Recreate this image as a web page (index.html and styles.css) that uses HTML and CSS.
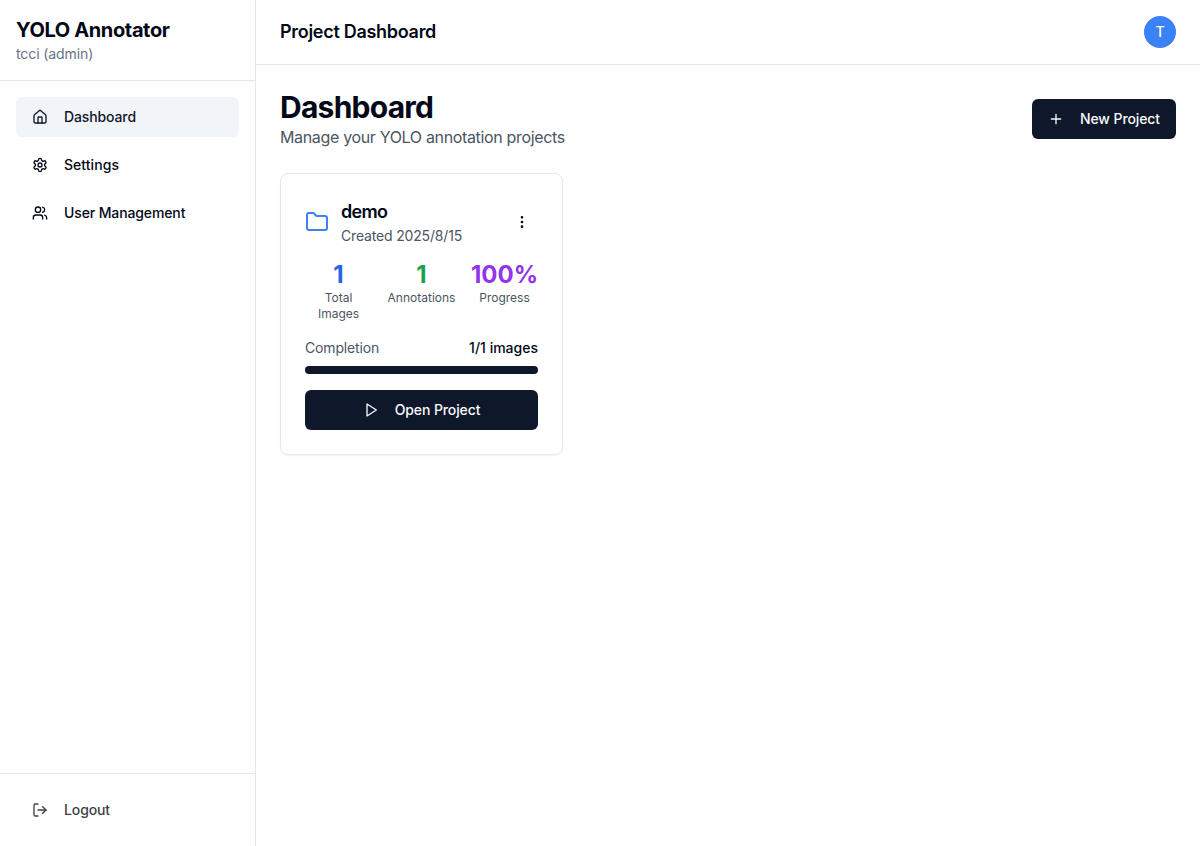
FILE: index.html
```html
<!DOCTYPE html>
<html lang="en">
<head>
<meta charset="utf-8">
<title>YOLO Annotator</title>
<link rel="stylesheet" href="styles.css">
</head>
<body>
<div class="app">
  <aside class="sidebar">
    <div class="brand">
      <h1 class="brand-name">YOLO Annotator</h1>
      <p class="brand-user">tcci (admin)</p>
    </div>
    <nav class="nav">
      <a class="nav-item active"><svg class="icon" viewBox="0 0 24 24"><path d="M15 21v-8a1 1 0 0 0-1-1h-4a1 1 0 0 0-1 1v8"/><path d="M3 10a2 2 0 0 1 .709-1.528l7-5.999a2 2 0 0 1 2.582 0l7 5.999A2 2 0 0 1 21 10v9a2 2 0 0 1-2 2H5a2 2 0 0 1-2-2z"/></svg><span>Dashboard</span></a>
      <a class="nav-item"><svg class="icon" viewBox="0 0 24 24"><path d="M12.22 2h-.44a2 2 0 0 0-2 2v.18a2 2 0 0 1-1 1.73l-.43.25a2 2 0 0 1-2 0l-.15-.08a2 2 0 0 0-2.73.73l-.22.38a2 2 0 0 0 .73 2.73l.15.1a2 2 0 0 1 1 1.72v.51a2 2 0 0 1-1 1.74l-.15.09a2 2 0 0 0-.73 2.73l.22.38a2 2 0 0 0 2.73.73l.15-.08a2 2 0 0 1 2 0l.43.25a2 2 0 0 1 1 1.73V20a2 2 0 0 0 2 2h.44a2 2 0 0 0 2-2v-.18a2 2 0 0 1 1-1.73l.43-.25a2 2 0 0 1 2 0l.15.08a2 2 0 0 0 2.73-.73l.22-.39a2 2 0 0 0-.73-2.73l-.15-.08a2 2 0 0 1-1-1.74v-.5a2 2 0 0 1 1-1.74l.15-.09a2 2 0 0 0 .73-2.73l-.22-.38a2 2 0 0 0-2.73-.73l-.15.08a2 2 0 0 1-2 0l-.43-.25a2 2 0 0 1-1-1.73V4a2 2 0 0 0-2-2z"/><circle cx="12" cy="12" r="3"/></svg><span class="settings-label">Settings</span></a>
      <a class="nav-item"><svg class="icon" viewBox="0 0 24 24"><path d="M16 21v-2a4 4 0 0 0-4-4H6a4 4 0 0 0-4 4v2"/><circle cx="9" cy="7" r="4"/><path d="M22 21v-2a4 4 0 0 0-3-3.870"/><path d="M16 3.130a4 4 0 0 1 0 7.750"/></svg><span>User Management</span></a>
    </nav>
    <div class="sidebar-footer">
      <a class="nav-item logout"><svg class="icon" viewBox="0 0 24 24"><path d="M9 21H5a2 2 0 0 1-2-2V5a2 2 0 0 1 2-2h4"/><path d="m16 17 5-5-5-5"/><path d="M21 12H9"/></svg><span>Logout</span></a>
    </div>
  </aside>
  <div class="main">
    <header class="topbar">
      <h2 class="topbar-title">Project Dashboard</h2>
      <div class="avatar">T</div>
    </header>
    <main class="content">
      <div class="page-head">
        <div>
          <h1 class="page-title">Dashboard</h1>
          <p class="page-sub">Manage your YOLO annotation projects</p>
        </div>
        <button class="btn new"><svg class="icon" viewBox="0 0 24 24"><path d="M5 12h14M12 5v14"/></svg><span>New Project</span></button>
      </div>
      <div class="grid">
        <section class="card">
          <div class="card-head">
            <svg class="folder" viewBox="0 0 24 24"><path d="M20 20a2 2 0 0 0 2-2V8a2 2 0 0 0-2-2h-7.900a2 2 0 0 1-1.690-.9L9.600 3.900A2 2 0 0 0 7.930 3H4a2 2 0 0 0-2 2v13a2 2 0 0 0 2 2Z"/></svg>
            <div class="card-info">
              <h3 class="card-title">demo</h3>
              <p class="card-date">Created 2025/8/15</p>
            </div>
            <button class="menu"><svg class="icon" viewBox="0 0 24 24"><circle cx="12" cy="12" r="1"/><circle cx="12" cy="5" r="1"/><circle cx="12" cy="19" r="1"/></svg></button>
          </div>
          <div class="stats">
            <div class="stat"><div class="num blue">1</div><div class="label">Total Images</div></div>
            <div class="stat"><div class="num green">1</div><div class="label">Annotations</div></div>
            <div class="stat"><div class="num purple">100%</div><div class="label">Progress</div></div>
          </div>
          <div class="completion">
            <span class="completion-label">Completion</span><span class="completion-value">1/1 images</span>
          </div>
          <div class="progress"><div class="progress-fill" style="width:100%"></div></div>
          <button class="btn open"><svg class="icon" viewBox="0 0 24 24"><path d="m6 3 14 9-14 9z"/></svg><span>Open Project</span></button>
        </section>
      </div>
    </main>
  </div>
</div>
</body>
</html>
```
FILE: styles.css
```css
* { box-sizing: border-box; margin: 0; padding: 0; }
body { font-family: Inter, "Liberation Sans", sans-serif; font-size: 14px; line-height: 20px; color: #020817; background: #fff; }
button { font: inherit; border: 0; background: none; color: inherit; }
span { white-space: nowrap; }
svg { display: block; flex: none; fill: none; stroke: currentColor; stroke-width: 2; stroke-linecap: round; stroke-linejoin: round; }
.icon { width: 16px; height: 16px; }
.app { display: flex; height: 846px; overflow: hidden; }
.sidebar { width: 256px; flex: none; display: flex; flex-direction: column; border-right: 1px solid #e2e8f0; }
.brand { padding: 16px; height: 81px; border-bottom: 1px solid #e2e8f0; }
.brand-name { font-size: 20px; line-height: 28px; font-weight: 700; letter-spacing: -.37px; }
.brand-user { color: #64748b; letter-spacing: -.1px; }
.nav { flex: 1; padding: 16px; display: flex; flex-direction: column; gap: 8px; }
.nav-item { display: flex; align-items: center; gap: 16px; height: 40px; padding: 0 16px; border-radius: 6px; font-weight: 500; letter-spacing: -.12px; }
.nav-item.active { background: #f1f5f9; color: #0f172a; }
.settings-label { letter-spacing: .05px; }
.sidebar-footer { padding: 16px; border-top: 1px solid #e2e8f0; }
.logout { color: #3f3f46; }
.main { flex: 1; min-width: 0; }
.topbar { height: 65px; padding: 0 24px; border-bottom: 1px solid #e2e8f0; display: flex; align-items: center; justify-content: space-between; }
.topbar-title { font-size: 18px; line-height: 28px; font-weight: 600; letter-spacing: -.29px; }
.avatar { width: 32px; height: 32px; border-radius: 50%; background: #3b82f6; color: #fff; font-weight: 500; display: flex; align-items: center; justify-content: center; }
.content { padding: 24px; }
.page-head { display: flex; align-items: center; justify-content: space-between; margin-bottom: 24px; }
.page-title { font-size: 30px; line-height: 36px; font-weight: 700; letter-spacing: -.75px; }
.page-sub { font-size: 16px; line-height: 24px; color: #4b5563; letter-spacing: -.34px; }
.btn { display: flex; align-items: center; justify-content: center; gap: 16px; height: 40px; border-radius: 6px; background: #0f172a; color: #f8fafc; font-weight: 500; letter-spacing: -.1px; }
.new { width: 144px; }
.grid { display: grid; grid-template-columns: repeat(3, 283px); gap: 24px; }
.card { height: 282px; padding: 24px; border: 1px solid #e2e8f0; border-radius: 8px; box-shadow: 0 1px 2px rgba(0, 0, 0, .05); }
.card-head { display: flex; align-items: center; gap: 12px; }
.folder { width: 24px; height: 24px; color: #3b82f6; }
.card-info { flex: 1; }
.card-title { font-size: 18px; line-height: 28px; font-weight: 600; letter-spacing: -.7px; }
.card-date { color: #4b5563; letter-spacing: -.17px; }
.menu { width: 32px; height: 40px; display: flex; align-items: center; justify-content: center; }
.stats { display: grid; grid-template-columns: repeat(3, minmax(0, 1fr)); gap: 16px; margin-top: 12px; text-align: center; }
.stat { min-width: 0; display: flex; flex-direction: column; align-items: center; }
.num { font-size: 24px; line-height: 30px; padding-top: 2px; font-weight: 700; }
.blue { color: #2563eb; }
.green { color: #16a34a; }
.purple { color: #9333ea; }
.label { font-size: 12px; line-height: 16px; color: #4b5563; }
.completion { display: flex; justify-content: space-between; margin-top: 16px; }
.completion-label { color: #4b5563; letter-spacing: -.15px; }
.completion-value { font-weight: 500; }
.progress { height: 8px; margin-top: 8px; border-radius: 4px; background: #f1f5f9; overflow: hidden; }
.progress-fill { height: 100%; background: #0f172a; }
.open { width: 100%; margin-top: 16px; }
```
